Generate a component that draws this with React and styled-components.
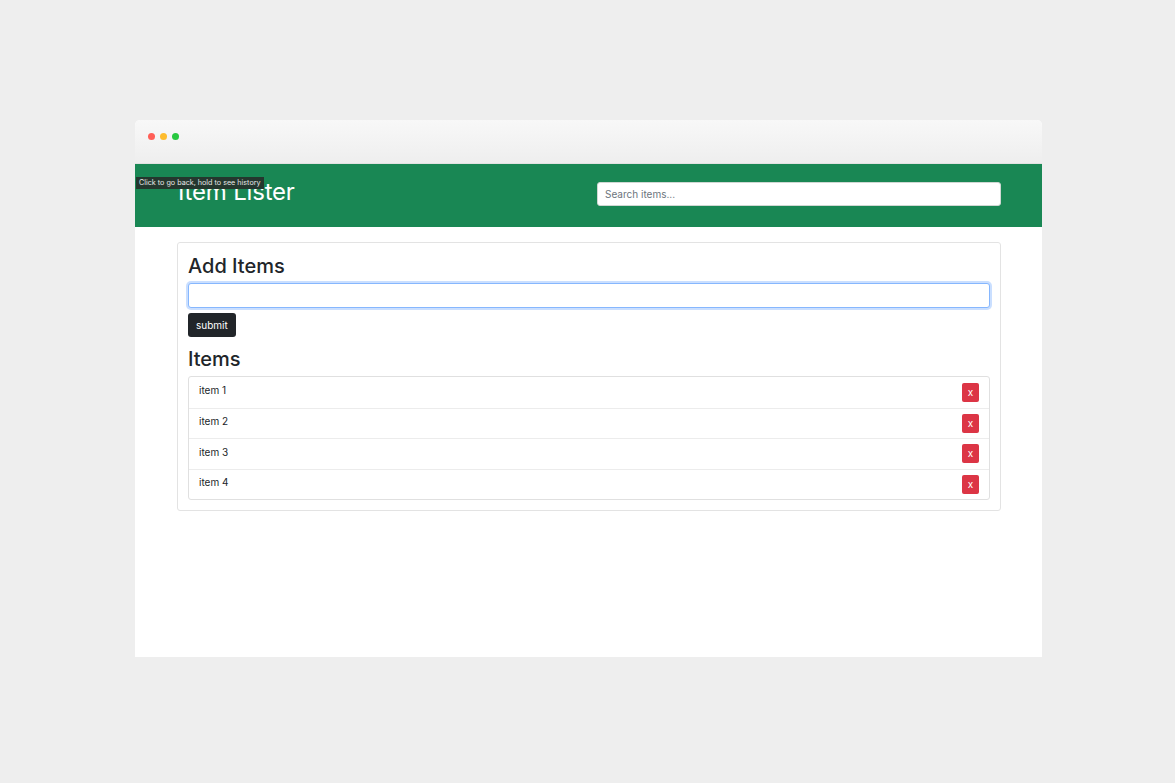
import React, { useState } from 'react';
import styled, { createGlobalStyle } from 'styled-components';

const GlobalStyle = createGlobalStyle`
  html, body {
    margin: 0;
    padding: 0;
    background: #eeeeee;
    font-family: Inter, "Liberation Sans", Arial, sans-serif;
  }
`;

const Page = styled.div`
  padding: 120px 0 0 135px;
  min-height: 783px;
  box-sizing: border-box;
`;

const Window = styled.div`
  width: 907px;
  height: 537px;
  background: #ffffff;
  border-radius: 5px 5px 0 0;
  overflow: hidden;
  display: flex;
  flex-direction: column;
`;

const TitleBar = styled.div`
  height: 44px;
  flex-shrink: 0;
  background: linear-gradient(#f8f8f8, #eeeeee);
  border-bottom: 1px solid #e2e2e2;
  box-sizing: border-box;
  display: flex;
  align-items: center;
  gap: 5px;
  padding: 0 0 10px 13px;
`;

const Dot = styled.span`
  width: 7px;
  height: 7px;
  border-radius: 50%;
  background: ${(p) => p.color};
`;

const Header = styled.header`
  position: relative;
  height: 63px;
  flex-shrink: 0;
  background: #198754;
  padding: 0 41px 0 42px;
  display: flex;
  align-items: center;
  justify-content: space-between;
`;

const Title = styled.h1`
  margin: 0 0 9px 1px;
  color: #ffffff;
  font-size: 24px;
  font-weight: 400;
  letter-spacing: -0.2px;
`;

const Tooltip = styled.div`
  position: absolute;
  left: 1px;
  top: 13px;
  height: 12px;
  padding: 0 3px;
  background: #24372e;
  color: #e6e6e6;
  font-size: 7.2px;
  line-height: 12px;
  white-space: nowrap;
`;

const Search = styled.input`
  width: 404px;
  height: 24px;
  box-sizing: border-box;
  border: 1px solid #d0d7d3;
  border-radius: 3px;
  padding: 0 7px;
  font-family: inherit;
  font-size: 10px;
  margin-bottom: 3px;
  outline: none;
  &::placeholder {
    color: #6c757d;
  }
`;

const Main = styled.main`
  padding: 15px 41px 0 42px;
`;

const Card = styled.section`
  border: 1px solid #e3e3e3;
  border-radius: 3px;
  padding: 10px;
  display: flex;
  flex-direction: column;
`;

const Heading = styled.h2`
  margin: ${(p) => p.$top}px 0 5px;
  font-size: 20px;
  font-weight: 450;
  line-height: 24px;
  color: #212529;
`;

const AddInput = styled.input`
  height: 25px;
  box-sizing: border-box;
  border: 1px solid #86b7fe;
  border-radius: 3px;
  box-shadow: 0 0 0 2px rgba(13, 110, 253, 0.22);
  outline: none;
  padding: 0 7px;
  font-family: inherit;
  font-size: 10px;
`;

const SubmitButton = styled.button`
  align-self: flex-start;
  margin-top: 5px;
  height: 24px;
  padding: 0 8px;
  border: none;
  border-radius: 3px;
  background: #212529;
  color: #ffffff;
  font-family: inherit;
  font-size: 10px;
  cursor: pointer;
`;

const List = styled.ul`
  list-style: none;
  margin: 0;
  padding: 0;
  border: 1px solid #e0e0e0;
  border-radius: 3px;
`;

const Row = styled.li`
  height: 30.5px;
  box-sizing: border-box;
  padding: 0 10px;
  display: flex;
  align-items: center;
  justify-content: space-between;
  font-size: 10px;
  color: #212529;
  & + & {
    border-top: 1px solid #ececec;
  }
`;

const RowLabel = styled.span`
  margin-top: -4px;
`;

const DeleteButton = styled.button`
  width: 17px;
  height: 19px;
  padding: 0;
  border: none;
  border-radius: 2px;
  background: #dc3545;
  color: #ffffff;
  font-family: inherit;
  font-size: 10px;
  line-height: 19px;
  cursor: pointer;
`;

const App = () => {
  const [items] = useState(['item 1', 'item 2', 'item 3', 'item 4']);

  return (
    <>
      <GlobalStyle />
      <Page>
        <Window>
          <TitleBar>
            <Dot color="#ff5f57" />
            <Dot color="#febc2e" />
            <Dot color="#28c840" />
          </TitleBar>
          <Header>
            <Title>Item Lister</Title>
            <Search type="text" placeholder="Search items..." />
            <Tooltip>Click to go back, hold to see history</Tooltip>
          </Header>
          <Main>
            <Card>
              <Heading $top={1}>Add Items</Heading>
              <AddInput type="text" />
              <SubmitButton>submit</SubmitButton>
              <Heading $top={10}>Items</Heading>
              <List>
                {items.map((item) => (
                  <Row key={item}>
                    <RowLabel>{item}</RowLabel>
                    <DeleteButton>x</DeleteButton>
                  </Row>
                ))}
              </List>
            </Card>
          </Main>
        </Window>
      </Page>
    </>
  );
};

export default App;
